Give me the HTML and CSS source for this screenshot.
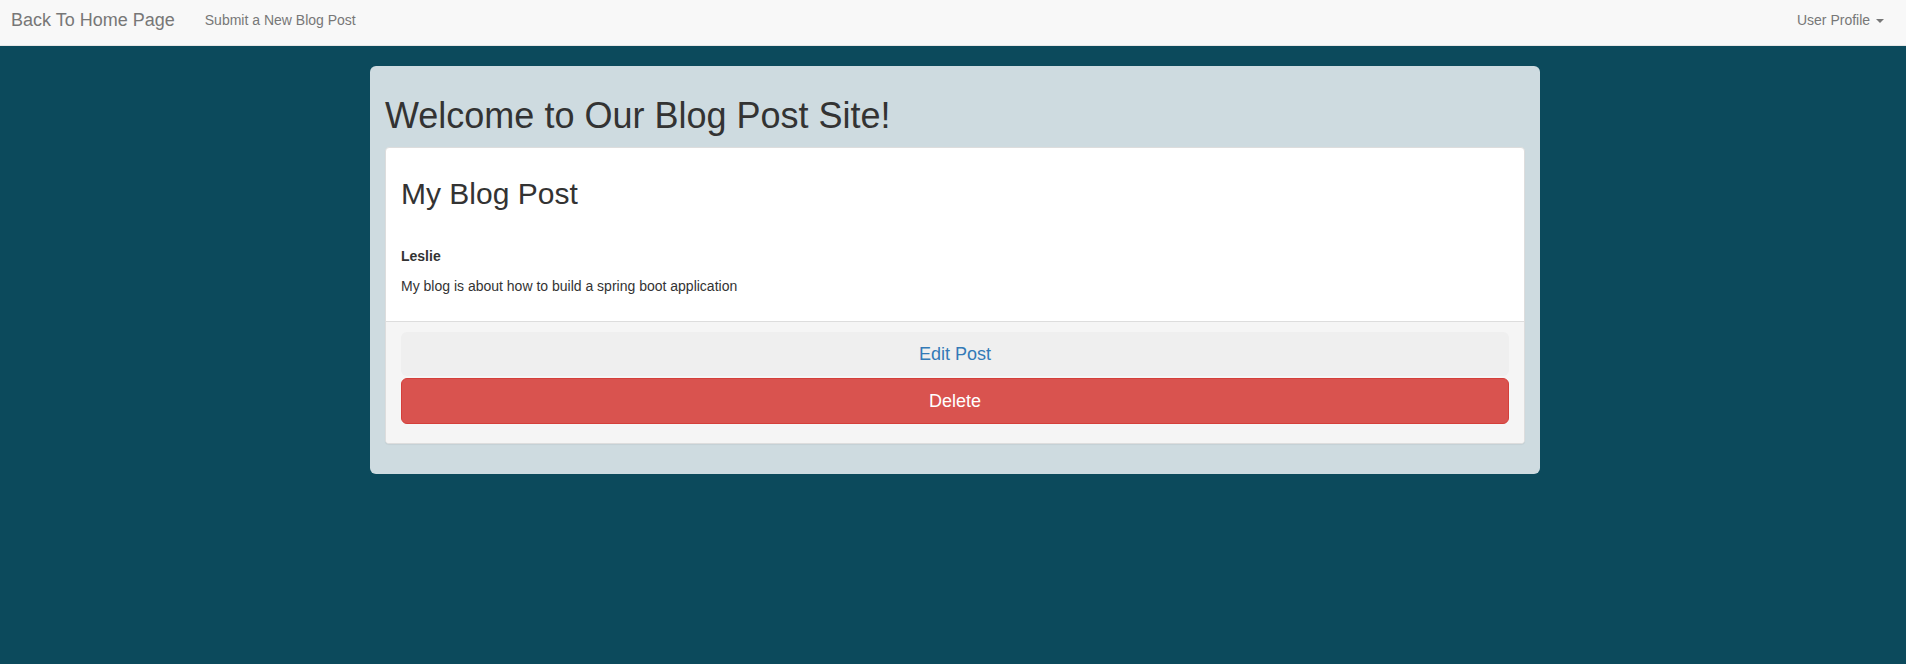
FILE: index.html
```html
<!DOCTYPE html>
<html lang="en">
<head>
<meta charset="utf-8">
<title>Blog Post</title>
<link rel="stylesheet" href="styles.css">
</head>
<body>
<nav class="navbar">
  <a class="brand" href="#">Back To Home Page</a>
  <a class="nav-link" href="#">Submit a New Blog Post</a>
  <a class="nav-link profile" href="#">User Profile <span class="caret"></span></a>
</nav>
<main class="jumbo">
  <h1 class="title">Welcome to Our Blog Post Site!</h1>
  <section class="panel">
    <div class="panel-body">
      <h2 class="post-title">My Blog Post</h2>
      <p class="author">Leslie</p>
      <p class="content">My blog is about how to build a spring boot application</p>
    </div>
    <div class="panel-footer">
      <a class="btn btn-edit" href="#">Edit Post</a>
      <button class="btn btn-delete" type="button">Delete</button>
    </div>
  </section>
</main>
</body>
</html>
```
FILE: styles.css
```css
* { box-sizing: border-box; }
html, body { margin: 0; padding: 0; }
body {
  background: #0c4a5c;
  font-family: "Liberation Sans", Arial, Helvetica, sans-serif;
  font-size: 14px;
  line-height: 20px;
  color: #333;
  min-height: 664px;
}
a { text-decoration: none; }

.navbar {
  display: flex;
  align-items: flex-start;
  height: 46px;
  background: #f8f8f8;
  border-bottom: 1px solid #e7e7e7;
}
.brand {
  font-size: 18px;
  line-height: 20px;
  color: #777;
  padding: 10px 0 0 11px;
}
.nav-link {
  font-size: 14px;
  line-height: 20px;
  color: #777;
  padding-top: 10px;
}
.brand + .nav-link { margin-left: 30px; }
.profile {
  margin-left: auto;
  padding-right: 22px;
}
.caret {
  display: inline-block;
  width: 0;
  height: 0;
  margin-left: 2px;
  vertical-align: middle;
  border-top: 4px solid #777;
  border-left: 4px solid transparent;
  border-right: 4px solid transparent;
}

.jumbo {
  display: block;
  width: 1170px;
  margin: 20px 0 0 calc(50% - 583px);
  background: #cedbe0;
  border-radius: 6px;
  padding: 30px 15px 30px;
}
.title {
  margin: 0 0 11px;
  font-size: 36px;
  line-height: 40px;
  font-weight: 400;
  color: #333;
}
.panel {
  background: #fff;
  border: 1px solid #ddd;
  border-radius: 4px;
  box-shadow: 0 1px 1px rgba(0, 0, 0, 0.05);
}
.panel-body {
  padding: 29px 15px 15px;
}
.post-title {
  margin: 0 0 36px;
  font-size: 30px;
  line-height: 33px;
  font-weight: 400;
  color: #333;
}
.author {
  margin: 0 0 10px;
  font-weight: 700;
}
.content {
  margin: 0 0 10px;
}
.panel-footer {
  display: flex;
  flex-direction: column;
  gap: 2px;
  background: #f5f5f5;
  border-top: 1px solid #ddd;
  border-radius: 0 0 3px 3px;
  padding: 10px 15px 19px;
}
.btn {
  display: block;
  width: 100%;
  font-family: inherit;
  font-size: 18px;
  text-align: center;
  border-radius: 6px;
  cursor: pointer;
}
.btn-edit {
  height: 44px;
  line-height: 44px;
  background: #efefef;
  color: #337ab7;
}
.btn-delete {
  height: 46px;
  line-height: 44px;
  padding: 0;
  background: #d9534f;
  border: 1px solid #d43f3a;
  color: #fff;
}
```
